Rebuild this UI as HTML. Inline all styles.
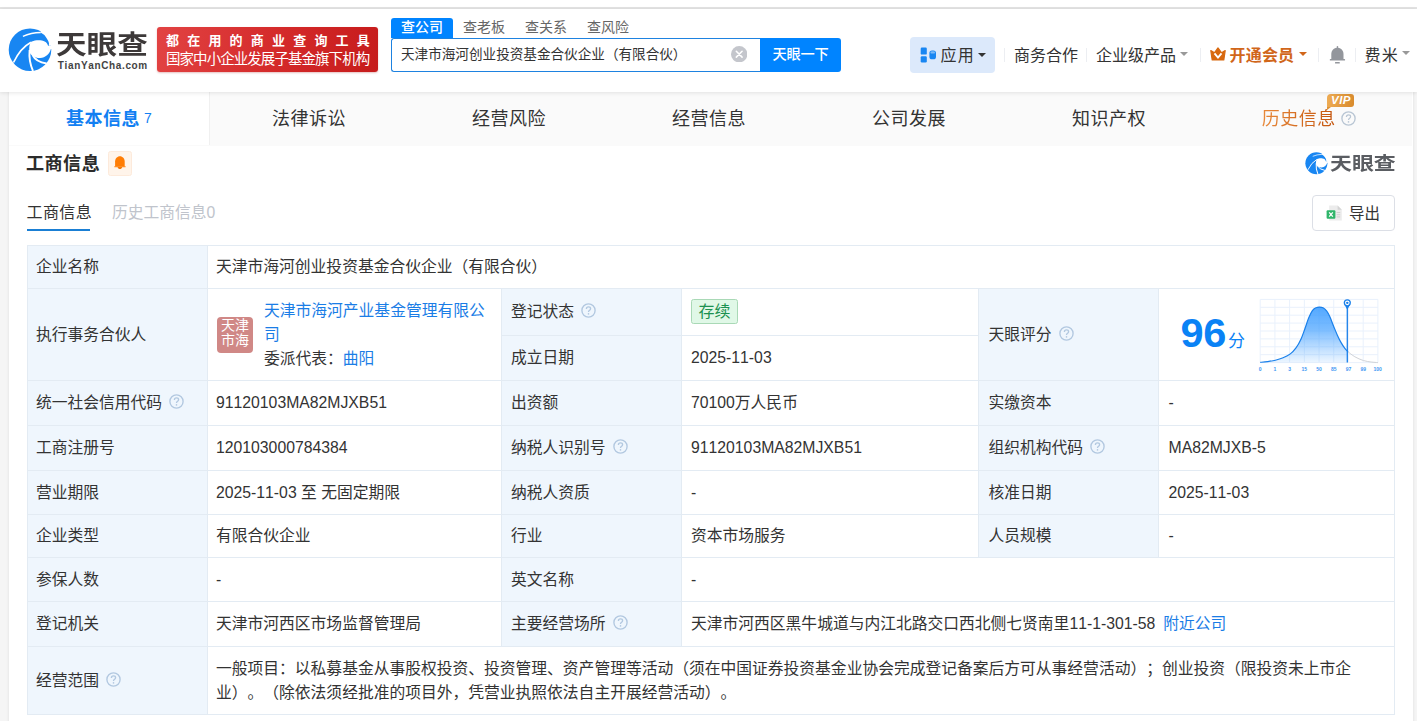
<!DOCTYPE html>
<html lang="zh-CN">
<head>
<meta charset="utf-8">
<title>天津市海河创业投资基金合伙企业（有限合伙） - 天眼查</title>
<style>
*{box-sizing:border-box;margin:0;padding:0}
html,body{width:1417px;height:721px;overflow:hidden}
body{text-spacing-trim:space-all;font-kerning:none;background:#f5f5f5;font-family:"Liberation Sans","Noto Sans CJK SC",sans-serif;color:#333;font-size:16px;position:relative}
.abs{position:absolute}
a{color:#1a7de6;text-decoration:none}
/* top */
#topwhite{left:0;top:0;width:1417px;height:7px;background:#fff}
#topline{left:0;top:7px;width:1417px;height:2px;background:#e3e3e3}
#header{left:0;top:9px;width:1417px;height:82.5px;background:#fff;box-shadow:0 1px 4px rgba(0,0,0,.10)}
/* card */
#card{box-shadow:0 0 3px rgba(0,0,0,.10);left:9px;top:91px;width:1404.4px;height:640px;background:#fff}
/* main tabs */
#tabs{left:9px;top:91px;width:1402.6px;height:54.5px;background:#fafafa;display:flex}
#tabs .t{width:200px;height:54px;line-height:56px;text-align:center;font-size:18px;letter-spacing:0.5px;color:#333;position:relative}
#tabs .t.on{background:#fff;color:#127ff2;font-weight:bold;box-shadow:1px 0 0 #f0f0f0}
#tabs .t.on sup{font-weight:normal;font-size:14px;position:relative;vertical-align:baseline;margin-left:4px;top:-2.5px;letter-spacing:0}
#tabs .t.his span{background:linear-gradient(90deg,#e8893a,#c3540c);-webkit-background-clip:text;background-clip:text;color:transparent;-webkit-text-fill-color:transparent}
#tabs .t.his .q{margin-left:5.5px;top:0.8px;vertical-align:baseline}
#vip{left:1326.8px;top:93.8px;width:27.4px;height:13.2px;border-radius:4px 3px 3px 0;background:linear-gradient(100deg,#efad55,#d88a2c);color:#fff;font-size:11.5px;font-weight:bold;font-style:italic;line-height:13.5px;text-align:center;letter-spacing:0.5px;padding-left:1px}
#vip:after{content:'';position:absolute;left:0;top:13px;border-left:0 solid transparent;border-right:4px solid transparent;border-top:3.6px solid #dd9236}

/* logo */
#logo-t{left:56.2px;top:24.5px;font-size:26.5px;font-weight:bold;color:#3d3939;letter-spacing:0;line-height:40px;white-space:nowrap;transform:scaleX(1.155);transform-origin:0 0}
#logo-s{left:57.8px;top:59px;font-size:10px;font-weight:bold;color:#444;letter-spacing:0.64px;line-height:14px;white-space:nowrap}
#slogan{left:157px;top:27px;width:221px;height:45px;border-radius:3px;background:linear-gradient(100deg,#e24343 0%,#d42a2a 55%,#c61b1b 100%);color:#fff;box-shadow:0 1px 2px rgba(150,0,0,.25)}
#slogan .l1{position:absolute;left:9px;top:5px;font-size:13px;font-weight:bold;letter-spacing:8.2px;line-height:18px;white-space:nowrap}
#slogan .l2{position:absolute;left:9px;top:22px;font-size:14.5px;letter-spacing:-0.95px;line-height:20px;white-space:nowrap}
/* search */
#stabs{left:391px;top:18px;height:20px;display:flex;font-size:14px;line-height:19px;color:#666}
#stabs div{width:62px;text-align:center;height:20px}
#stabs .on{background:#0084ff;color:#fff;font-weight:500;border-radius:3px 3px 0 0}
#sinput{left:391px;top:38px;width:370px;height:34px;border:1px solid #1e82e0;border-right:none;border-radius:3px 0 0 3px;background:#fff;font-size:13.6px;line-height:32.5px;padding-left:9px;color:#333;white-space:nowrap}
#sbtn{left:760px;top:38px;width:81px;height:34px;background:#0084ff;color:#fff;font-size:14.2px;font-weight:500;line-height:33.5px;text-align:center;border-radius:0 3px 3px 0;letter-spacing:-0.2px}
#sclear{left:730.6px;top:45.7px;width:16.4px;height:16.4px}
/* nav */
.nav{top:43px;height:26px;line-height:25px;font-size:16px;color:#333;white-space:nowrap}
.sep{top:48px;width:1px;height:14px;background:#eceef2}
#appbtn{left:910px;top:37px;width:85px;height:36px;border-radius:4px;background:#dce9fb}
.tri{width:0;height:0;border-left:4px solid transparent;border-right:4px solid transparent;border-top:4.5px solid #333}

/* section */
#h2{left:26px;top:150px;letter-spacing:0.45px;font-size:18.1px;font-weight:bold;line-height:28px;color:#2b2b2b;white-space:nowrap}
#bellbox{left:108px;top:151px;width:24px;height:25px;border:1px solid #fdeadb;border-radius:2.5px;background:#fff4ea}
#wm-t{left:1329.6px;top:150.4px;font-size:18.5px;font-weight:bold;color:#5a5d62;line-height:28px;white-space:nowrap;transform:scaleX(1.185);transform-origin:0 0}
#st1{left:26.5px;top:199.5px;letter-spacing:0.4px;font-size:16px;line-height:26px;color:#333;white-space:nowrap}
#st1u{left:27px;top:229px;width:63px;height:2px;background:#1a7fd4}
#st2{left:112px;top:199.5px;font-size:15.75px;line-height:26px;color:#c0c4cc;white-space:nowrap}
#export{left:1312px;top:195px;width:83px;height:36px;border:1px solid #dcdfe6;border-radius:4px;background:#fff}
#export span{position:absolute;left:36px;top:5px;font-size:15.5px;line-height:26px;color:#333}

/* table */
#tb{left:27px;top:245px;width:1368px;height:470px;background:#e3ebf3}
#tb .c{position:absolute;background:#fff;font-size:15.78px;line-height:24px;color:#333;padding-left:8px;display:flex;align-items:center;white-space:nowrap}
#tb .l{background:#eff6fd;padding-left:8px}
.q{display:inline-block;width:15px;height:15px;margin-left:7px;flex:none;position:relative;top:-1.4px}
#tb a{color:#1a7de6}
.tag{display:inline-block;position:relative;top:-1px;height:25px;line-height:23px;padding:0 6.5px;border:1px solid #a9d9b6;background:#e0f8e7;color:#1c9150;border-radius:2.5px;font-size:16px}
.ava{position:absolute;left:9px;top:28px;width:36px;height:36px;border-radius:4px;background:#d08886;color:#fff;font-size:14px;line-height:15px;text-align:center;padding-top:1px;white-space:normal}
.partner{position:absolute;left:56px;top:10px;width:232px;white-space:normal;line-height:24px}
#score{position:absolute;left:21.6px;top:20.5px;font-size:41.5px;font-weight:bold;color:#0a82f5;line-height:46px;letter-spacing:-0.5px}
#fen{position:absolute;left:69px;top:40.5px;font-size:17px;color:#0a82f5;line-height:24px}
</style>
</head>
<body>
<div class="abs" id="topwhite"></div>
<div class="abs" id="topline"></div>
<div class="abs" id="card"></div>
<div class="abs" id="tabs">
  <div class="t on">基本信息<sup>7</sup></div>
  <div class="t">法律诉讼</div>
  <div class="t">经营风险</div>
  <div class="t">经营信息</div>
  <div class="t">公司发展</div>
  <div class="t">知识产权</div>
  <div class="t his"><span>历史信息</span><svg class="q" viewBox="0 0 15 15"><circle cx="7.5" cy="7.5" r="6.6" fill="none" stroke="#b9c6d4" stroke-width="1.35"/><path d="M5.4 6 C5.4 4.6 6.3 3.9 7.5 3.9 C8.7 3.9 9.6 4.6 9.6 5.7 C9.6 7.2 7.5 7.2 7.5 8.9" fill="none" stroke="#b9c6d4" stroke-width="1.2"/><circle cx="7.5" cy="10.9" r="0.8" fill="#b9c6d4"/></svg></div>
</div>
<div class="abs" id="vip">VIP</div>
<div class="abs" id="header"></div>

<svg class="abs" style="left:0;top:20px" width="80" height="60" viewBox="0 20 80 60">
  <circle cx="30" cy="49.7" r="21.3" fill="#1886f2"/>
  <path d="M48.1 45.7 C47.6 44.2 46.9 43 46 42.2 C44.9 41.3 43.5 40.7 42 40.4 C39.5 40 37 40.1 35 40.4 C33.2 40.7 31.8 41.3 30.8 42.1 C29.2 44.5 28.8 49.5 29.6 52.6 C30.4 54.2 31.4 55.2 32.9 55.9 C35 57.3 37.5 58 40.2 57.9 C45.5 57.5 49.6 54 50.9 48.9 L53 48.9 L53 45.7 Z" fill="#fff"/>
  <path d="M22.9 36.3 Q31 32.8 40.8 32.5" stroke="#fff" stroke-width="1.35" fill="none"/>
  <path d="M40.6 32.6 Q44.4 34.4 46.5 37.9 Q48.5 40.8 49 43.3 L48.8 45.7 L53 45.7 L53 29 L41.6 29 Z" fill="#fff"/>
  <path d="M31 42.3 Q20.5 48 13.5 62.5" stroke="#fff" stroke-width="1.7" fill="none"/>
  <path d="M29.6 50 Q28.6 61 33 71" stroke="#fff" stroke-width="1.9" fill="none"/>
  <path d="M32.5 55 Q36 62 46.5 63.5" stroke="#fff" stroke-width="1.8" fill="none"/>
</svg>
<div class="abs" id="logo-t">天眼查</div>
<div class="abs" id="logo-s">TianYanCha.com</div>
<div class="abs" id="slogan"><div class="l1">都在用的商业查询工具</div><div class="l2">国家中小企业发展子基金旗下机构</div></div>
<div class="abs" id="stabs"><div class="on">查公司</div><div>查老板</div><div>查关系</div><div>查风险</div></div>
<div class="abs" id="sinput">天津市海河创业投资基金合伙企业（有限合伙）</div>
<svg class="abs" id="sclear" viewBox="0 0 17 17"><circle cx="8.5" cy="8.5" r="8.5" fill="#c4c6cc"/><path d="M5.5 5.5 L11.5 11.5 M11.5 5.5 L5.5 11.5" stroke="#fff" stroke-width="1.6" stroke-linecap="round"/></svg>
<div class="abs" id="sbtn">天眼一下</div>
<div class="abs" id="appbtn"></div>
<svg class="abs" style="left:920px;top:47px" width="17" height="16" viewBox="0 0 17 16"><rect x="0.7" y="0.6" width="6.1" height="7" rx="1.2" fill="#1886f2"/><rect x="0.7" y="9.3" width="6.1" height="6.1" rx="1.2" fill="#1886f2"/><rect x="9.4" y="3.4" width="6.6" height="8.9" rx="2.6" fill="#1886f2"/><ellipse cx="12.7" cy="5.4" rx="2.4" ry="1.2" fill="#7ab9f7"/></svg>
<div class="abs nav" style="left:940.6px;letter-spacing:1.2px">应用</div>
<div class="abs tri" style="left:978px;top:53px"></div>
<div class="abs sep" style="left:1004px"></div>
<div class="abs nav" style="left:1014px">商务合作</div>
<div class="abs sep" style="left:1086px"></div>
<div class="abs nav" style="left:1096px">企业级产品</div>
<div class="abs tri" style="left:1180px;top:52px;border-top-color:#999"></div>
<div class="abs sep" style="left:1200px"></div>
<svg class="abs" style="left:1210px;top:47px" width="16" height="14" viewBox="0 0 16 14"><path d="M0.8 3.6 L4.4 5.8 L8 0.9 L11.6 5.8 L15.2 3.6 L13.8 13 L2.2 13 Z" fill="#d8690f" stroke="#d8690f" stroke-width="1.2" stroke-linejoin="round"/><path d="M4.5 6.4 L8 10.6 L11.5 6.4" stroke="#fff" stroke-width="1.9" fill="none"/></svg>
<div class="abs nav" style="left:1229.5px;color:#d1661a;font-weight:bold;letter-spacing:0.2px">开通会员</div>
<div class="abs tri" style="left:1299px;top:52px;border-top-color:#d1661a"></div>
<div class="abs sep" style="left:1318px"></div>
<svg class="abs" style="left:1329px;top:45px" width="17" height="19" viewBox="0 0 17 19"><rect x="7.8" y="1" width="1.3" height="3" rx="0.6" fill="#93969c"/><path d="M2.3 14.6 L2.3 9 C2.3 5.4 5 2.7 8.4 2.7 C11.8 2.7 14.5 5.4 14.5 9 L14.5 14.6 Z" fill="#93969c"/><rect x="0.8" y="14" width="15.3" height="1.6" rx="0.6" fill="#93969c"/><rect x="6" y="17.1" width="4.8" height="1.5" rx="0.5" fill="#93969c"/></svg>
<div class="abs sep" style="left:1355px"></div>
<div class="abs nav" style="left:1364.6px;letter-spacing:1.2px">费米</div>
<div class="abs tri" style="left:1402px;top:51px;border-top-color:#999"></div>
<!--HEADER-CONTENT-->

<div class="abs" id="h2">工商信息</div>
<div class="abs" id="bellbox"></div>
<svg class="abs" style="left:114px;top:156px" width="12" height="14" viewBox="0 0 12 14"><path d="M1.1 10.8 L1.1 5.6 C1.1 2.6 3.2 0.3 5.9 0.3 C8.6 0.3 10.7 2.6 10.7 5.6 L10.7 10.8 Z" fill="#ff7d05"/><rect x="0.1" y="10.3" width="11.7" height="0.9" rx="0.4" fill="#ff8a1f"/><path d="M3.6 11 L8.2 11 C7.9 12.4 7 13.1 5.9 13.1 C4.8 13.1 3.9 12.4 3.6 11 Z" fill="#f27a0a"/></svg>
<svg class="abs" style="left:1304.9px;top:152px" width="22.8" height="22.8" viewBox="8 28 44 44">
  <circle cx="30" cy="49.7" r="21.3" fill="#1886f2"/>
  <path d="M48.1 45.7 C47.6 44.2 46.9 43 46 42.2 C44.9 41.3 43.5 40.7 42 40.4 C39.5 40 37 40.1 35 40.4 C33.2 40.7 31.8 41.3 30.8 42.1 C29.2 44.5 28.8 49.5 29.6 52.6 C30.4 54.2 31.4 55.2 32.9 55.9 C35 57.3 37.5 58 40.2 57.9 C45.5 57.5 49.6 54 50.9 48.9 L53 48.9 L53 45.7 Z" fill="#fff"/>
  <path d="M22.9 36.3 Q31 32.8 40.8 32.5" stroke="#fff" stroke-width="1.4" fill="none"/>
  <path d="M40.6 32.6 Q44.4 34.4 46.5 37.9 Q48.5 40.8 49 43.3 L48.8 45.7 L53 45.7 L53 29 L41.6 29 Z" fill="#fff"/>
  <path d="M31 42.3 Q20.5 48 13.5 62.5" stroke="#fff" stroke-width="1.8" fill="none"/>
  <path d="M29.6 50 Q28.6 61 33 71" stroke="#fff" stroke-width="2" fill="none"/>
  <path d="M32.5 55 Q36 62 46.5 63.5" stroke="#fff" stroke-width="1.9" fill="none"/>
</svg>
<div class="abs" id="wm-t">天眼查</div>
<div class="abs" id="st1">工商信息</div>
<div class="abs" id="st1u"></div>
<div class="abs" id="st2">历史工商信息0</div>
<div class="abs" id="export">
<svg style="position:absolute;left:13px;top:9px" width="17" height="17" viewBox="0 0 17 17"><path d="M3.2 0.6 L11.6 0.6 L15.8 4.8 L15.8 15.6 L3.2 15.6 Z" fill="#ececec"/><path d="M11.6 0.6 L15.8 4.8 L11.6 4.8 Z" fill="#d4d4d4"/><rect x="10.6" y="7" width="3.6" height="1" fill="#d0d0d0"/><rect x="10.6" y="9.2" width="3.6" height="1" fill="#d0d0d0"/><rect x="10.6" y="11.4" width="3.6" height="1" fill="#d0d0d0"/><rect x="0.6" y="5.2" width="8.8" height="8.6" rx="1" fill="#2fb56a"/><path d="M3.2 7.4 L6.8 11.6 M6.8 7.4 L3.2 11.6" stroke="#fff" stroke-width="1.3"/></svg>
<span>导出</span></div>
<!--SECTION-->
<div class="abs" id="tb">
<div class="c l" style="left:1px;top:1px;width:179px;height:42px;">企业名称</div>
<div class="c " style="left:181px;top:1px;width:1186px;height:42px;">天津市海河创业投资基金合伙企业（有限合伙）</div>
<div class="c l" style="left:1px;top:44px;width:179px;height:91px;">执行事务合伙人</div>
<div class="c " style="left:181px;top:44px;width:293px;height:91px;"><div class="ava">天津<br>市海</div><div class="partner"><a>天津市海河产业基金管理有限公司</a><br>委派代表：<a>曲阳</a></div></div>
<div class="c l" style="padding-left:9px;left:475px;top:44px;width:179px;height:46px;">登记状态<svg class="q" viewBox="0 0 15 15"><circle cx="7.5" cy="7.5" r="6.6" fill="none" stroke="#b2c8e0" stroke-width="1.35"/><path d="M5.4 6 C5.4 4.6 6.3 3.9 7.5 3.9 C8.7 3.9 9.6 4.6 9.6 5.7 C9.6 7.2 7.5 7.2 7.5 8.9" fill="none" stroke="#b2c8e0" stroke-width="1.35"/><circle cx="7.5" cy="10.9" r="0.8" fill="#b2c8e0"/></svg></div>
<div class="c " style="padding-left:9px;left:655px;top:44px;width:296px;height:46px;"><span class="tag">存续</span></div>
<div class="c l" style="padding-left:9px;left:475px;top:91px;width:179px;height:44px;">成立日期</div>
<div class="c " style="padding-left:9px;left:655px;top:91px;width:296px;height:44px;">2025-11-03</div>
<div class="c l" style="padding-left:9.5px;left:952px;top:44px;width:179px;height:91px;">天眼评分<svg class="q" viewBox="0 0 15 15"><circle cx="7.5" cy="7.5" r="6.6" fill="none" stroke="#b2c8e0" stroke-width="1.35"/><path d="M5.4 6 C5.4 4.6 6.3 3.9 7.5 3.9 C8.7 3.9 9.6 4.6 9.6 5.7 C9.6 7.2 7.5 7.2 7.5 8.9" fill="none" stroke="#b2c8e0" stroke-width="1.35"/><circle cx="7.5" cy="10.9" r="0.8" fill="#b2c8e0"/></svg></div>
<div class="c " style="padding-left:9.5px;left:1132px;top:44px;width:235px;height:91px;"><div id="score">96</div><div id="fen">分</div><svg style="position:absolute;left:0;top:0" width="236" height="91" viewBox="0 0 236 91"><path d="M101.20 10.40 V73.60 M101.20 10.40 H218.90 M115.91 10.40 V73.60 M101.20 18.30 H218.90 M130.62 10.40 V73.60 M101.20 26.20 H218.90 M145.34 10.40 V73.60 M101.20 34.10 H218.90 M160.05 10.40 V73.60 M101.20 42.00 H218.90 M174.76 10.40 V73.60 M101.20 49.90 H218.90 M189.48 10.40 V73.60 M101.20 57.80 H218.90 M204.19 10.40 V73.60 M101.20 65.70 H218.90 M218.90 10.40 V73.60 M101.20 73.60 H218.90 " stroke="#e9f1fc" stroke-width="1" fill="none"/><defs><linearGradient id="cg" x1="0" y1="0" x2="0" y2="1"><stop offset="0" stop-color="#2d95ff" stop-opacity="0.82"/><stop offset="0.4" stop-color="#3d9dff" stop-opacity="0.68"/><stop offset="1" stop-color="#4aa4ff" stop-opacity="0.10"/></linearGradient></defs><path d="M101.24 73.37 C102.45 73.25 105.96 72.98 108.48 72.62 C110.99 72.27 113.74 71.90 116.34 71.25 C118.94 70.61 121.58 69.82 124.08 68.76 C126.57 67.70 129.13 66.57 131.31 64.89 C133.50 63.20 135.37 61.19 137.18 58.65 C138.99 56.11 140.71 52.83 142.17 49.66 C143.62 46.50 144.66 43.11 145.91 39.68 C147.16 36.25 148.41 32.09 149.66 29.08 C150.90 26.06 152.15 23.32 153.40 21.59 C154.65 19.86 155.96 19.30 157.14 18.72 C158.33 18.14 159.37 18.07 160.51 18.10 C161.66 18.12 162.80 18.16 164.01 18.84 C165.21 19.53 166.61 20.72 167.75 22.21 C168.89 23.71 169.73 25.33 170.87 27.83 C172.01 30.32 173.36 34.13 174.61 37.19 C175.86 40.24 177.11 43.43 178.36 46.17 C179.60 48.92 180.85 51.45 182.10 53.66 C183.35 55.86 184.70 57.88 185.84 59.40 C186.99 60.92 188.44 62.21 188.96 62.77 L188.96 73.60 L101.24 73.60 Z" fill="url(#cg)"/><path d="M188.96 62.77 C190.11 63.60 193.27 66.30 195.83 67.76 C198.38 69.21 201.61 70.63 204.31 71.50 C207.01 72.38 209.61 72.65 212.05 73.00 C214.48 73.35 217.77 73.52 218.91 73.62" stroke="#d0d3d8" stroke-width="1" fill="none"/><path d="M101.24 73.37 C102.45 73.25 105.96 72.98 108.48 72.62 C110.99 72.27 113.74 71.90 116.34 71.25 C118.94 70.61 121.58 69.82 124.08 68.76 C126.57 67.70 129.13 66.57 131.31 64.89 C133.50 63.20 135.37 61.19 137.18 58.65 C138.99 56.11 140.71 52.83 142.17 49.66 C143.62 46.50 144.66 43.11 145.91 39.68 C147.16 36.25 148.41 32.09 149.66 29.08 C150.90 26.06 152.15 23.32 153.40 21.59 C154.65 19.86 155.96 19.30 157.14 18.72 C158.33 18.14 159.37 18.07 160.51 18.10 C161.66 18.12 162.80 18.16 164.01 18.84 C165.21 19.53 166.61 20.72 167.75 22.21 C168.89 23.71 169.73 25.33 170.87 27.83 C172.01 30.32 173.36 34.13 174.61 37.19 C175.86 40.24 177.11 43.43 178.36 46.17 C179.60 48.92 180.85 51.45 182.10 53.66 C183.35 55.86 184.70 57.88 185.84 59.40 C186.99 60.92 188.44 62.21 188.96 62.77" stroke="#1a80ea" stroke-width="1.2" fill="none"/><path d="M188.30 16.00 V73.60" stroke="#1a80ea" stroke-width="1.3"/><path d="M185.30 15.35 L188.30 20.85 L191.30 15.35 Z" fill="#1a80ea"/><circle cx="188.30" cy="13.85" r="3.6" fill="#1a80ea"/><circle cx="188.30" cy="13.85" r="2.3" fill="#fff"/><circle cx="188.30" cy="13.85" r="1.2" fill="#1a80ea"/><text x="101.20" y="81.50" font-size="5" font-weight="bold" fill="#3f97f3" text-anchor="middle" font-family="Liberation Sans, sans-serif">0</text><text x="115.91" y="81.50" font-size="5" font-weight="bold" fill="#3f97f3" text-anchor="middle" font-family="Liberation Sans, sans-serif">1</text><text x="130.62" y="81.50" font-size="5" font-weight="bold" fill="#3f97f3" text-anchor="middle" font-family="Liberation Sans, sans-serif">3</text><text x="145.34" y="81.50" font-size="5" font-weight="bold" fill="#3f97f3" text-anchor="middle" font-family="Liberation Sans, sans-serif">15</text><text x="160.05" y="81.50" font-size="5" font-weight="bold" fill="#3f97f3" text-anchor="middle" font-family="Liberation Sans, sans-serif">50</text><text x="174.76" y="81.50" font-size="5" font-weight="bold" fill="#3f97f3" text-anchor="middle" font-family="Liberation Sans, sans-serif">85</text><text x="189.48" y="81.50" font-size="5" font-weight="bold" fill="#3f97f3" text-anchor="middle" font-family="Liberation Sans, sans-serif">97</text><text x="204.19" y="81.50" font-size="5" font-weight="bold" fill="#3f97f3" text-anchor="middle" font-family="Liberation Sans, sans-serif">99</text><text x="218.60" y="81.50" font-size="5" font-weight="bold" fill="#3f97f3" text-anchor="middle" font-family="Liberation Sans, sans-serif">100</text></svg></div>
<div class="c l" style="left:1px;top:136px;width:179px;height:44px;">统一社会信用代码<svg class="q" viewBox="0 0 15 15"><circle cx="7.5" cy="7.5" r="6.6" fill="none" stroke="#b2c8e0" stroke-width="1.35"/><path d="M5.4 6 C5.4 4.6 6.3 3.9 7.5 3.9 C8.7 3.9 9.6 4.6 9.6 5.7 C9.6 7.2 7.5 7.2 7.5 8.9" fill="none" stroke="#b2c8e0" stroke-width="1.35"/><circle cx="7.5" cy="10.9" r="0.8" fill="#b2c8e0"/></svg></div>
<div class="c " style="left:181px;top:136px;width:293px;height:44px;">91120103MA82MJXB51</div>
<div class="c l" style="padding-left:9px;left:475px;top:136px;width:179px;height:44px;">出资额</div>
<div class="c " style="padding-left:9px;left:655px;top:136px;width:296px;height:44px;">70100万人民币</div>
<div class="c l" style="padding-left:9.5px;left:952px;top:136px;width:179px;height:44px;">实缴资本</div>
<div class="c " style="padding-left:9.5px;left:1132px;top:136px;width:235px;height:44px;">-</div>
<div class="c l" style="left:1px;top:181px;width:179px;height:44px;">工商注册号</div>
<div class="c " style="left:181px;top:181px;width:293px;height:44px;">120103000784384</div>
<div class="c l" style="padding-left:9px;left:475px;top:181px;width:179px;height:44px;">纳税人识别号<svg class="q" viewBox="0 0 15 15"><circle cx="7.5" cy="7.5" r="6.6" fill="none" stroke="#b2c8e0" stroke-width="1.35"/><path d="M5.4 6 C5.4 4.6 6.3 3.9 7.5 3.9 C8.7 3.9 9.6 4.6 9.6 5.7 C9.6 7.2 7.5 7.2 7.5 8.9" fill="none" stroke="#b2c8e0" stroke-width="1.35"/><circle cx="7.5" cy="10.9" r="0.8" fill="#b2c8e0"/></svg></div>
<div class="c " style="padding-left:9px;left:655px;top:181px;width:296px;height:44px;">91120103MA82MJXB51</div>
<div class="c l" style="padding-left:9.5px;left:952px;top:181px;width:179px;height:44px;">组织机构代码<svg class="q" viewBox="0 0 15 15"><circle cx="7.5" cy="7.5" r="6.6" fill="none" stroke="#b2c8e0" stroke-width="1.35"/><path d="M5.4 6 C5.4 4.6 6.3 3.9 7.5 3.9 C8.7 3.9 9.6 4.6 9.6 5.7 C9.6 7.2 7.5 7.2 7.5 8.9" fill="none" stroke="#b2c8e0" stroke-width="1.35"/><circle cx="7.5" cy="10.9" r="0.8" fill="#b2c8e0"/></svg></div>
<div class="c " style="padding-left:9.5px;left:1132px;top:181px;width:235px;height:44px;">MA82MJXB-5</div>
<div class="c l" style="left:1px;top:226px;width:179px;height:43px;">营业期限</div>
<div class="c " style="left:181px;top:226px;width:293px;height:43px;">2025-11-03 至 无固定期限</div>
<div class="c l" style="padding-left:9px;left:475px;top:226px;width:179px;height:43px;">纳税人资质</div>
<div class="c " style="padding-left:9px;left:655px;top:226px;width:296px;height:43px;">-</div>
<div class="c l" style="padding-left:9.5px;left:952px;top:226px;width:179px;height:43px;">核准日期</div>
<div class="c " style="padding-left:9.5px;left:1132px;top:226px;width:235px;height:43px;">2025-11-03</div>
<div class="c l" style="left:1px;top:270px;width:179px;height:42px;">企业类型</div>
<div class="c " style="left:181px;top:270px;width:293px;height:42px;">有限合伙企业</div>
<div class="c l" style="padding-left:9px;left:475px;top:270px;width:179px;height:42px;">行业</div>
<div class="c " style="padding-left:9px;left:655px;top:270px;width:296px;height:42px;">资本市场服务</div>
<div class="c l" style="padding-left:9.5px;left:952px;top:270px;width:179px;height:42px;">人员规模</div>
<div class="c " style="padding-left:9.5px;left:1132px;top:270px;width:235px;height:42px;">-</div>
<div class="c l" style="left:1px;top:313px;width:179px;height:43px;">参保人数</div>
<div class="c " style="left:181px;top:313px;width:293px;height:43px;">-</div>
<div class="c l" style="padding-left:9px;left:475px;top:313px;width:179px;height:43px;">英文名称</div>
<div class="c " style="padding-left:9px;left:655px;top:313px;width:712px;height:43px;">-</div>
<div class="c l" style="left:1px;top:357px;width:179px;height:44px;">登记机关</div>
<div class="c " style="left:181px;top:357px;width:293px;height:44px;">天津市河西区市场监督管理局</div>
<div class="c l" style="padding-left:9px;left:475px;top:357px;width:179px;height:44px;">主要经营场所<svg class="q" viewBox="0 0 15 15"><circle cx="7.5" cy="7.5" r="6.6" fill="none" stroke="#b2c8e0" stroke-width="1.35"/><path d="M5.4 6 C5.4 4.6 6.3 3.9 7.5 3.9 C8.7 3.9 9.6 4.6 9.6 5.7 C9.6 7.2 7.5 7.2 7.5 8.9" fill="none" stroke="#b2c8e0" stroke-width="1.35"/><circle cx="7.5" cy="10.9" r="0.8" fill="#b2c8e0"/></svg></div>
<div class="c " style="padding-left:9px;left:655px;top:357px;width:712px;height:44px;">天津市河西区黑牛城道与内江北路交口西北侧七贤南里11-1-301-58<a style="margin-left:8px">附近公司</a></div>
<div class="c l" style="left:1px;top:402px;width:179px;height:67px;">经营范围<svg class="q" viewBox="0 0 15 15"><circle cx="7.5" cy="7.5" r="6.6" fill="none" stroke="#b2c8e0" stroke-width="1.35"/><path d="M5.4 6 C5.4 4.6 6.3 3.9 7.5 3.9 C8.7 3.9 9.6 4.6 9.6 5.7 C9.6 7.2 7.5 7.2 7.5 8.9" fill="none" stroke="#b2c8e0" stroke-width="1.35"/><circle cx="7.5" cy="10.9" r="0.8" fill="#b2c8e0"/></svg></div>
<div class="c " style="left:181px;top:402px;width:1186px;height:67px;"><div>一般项目：以私募基金从事股权投资、投资管理、资产管理等活动（须在中国证券投资基金业协会完成登记备案后方可从事经营活动）；创业投资（限投资未上市企<br>业）。（除依法须经批准的项目外，凭营业执照依法自主开展经营活动）。</div></div>
</div>
<!--TABLE-->
</body>
</html>
